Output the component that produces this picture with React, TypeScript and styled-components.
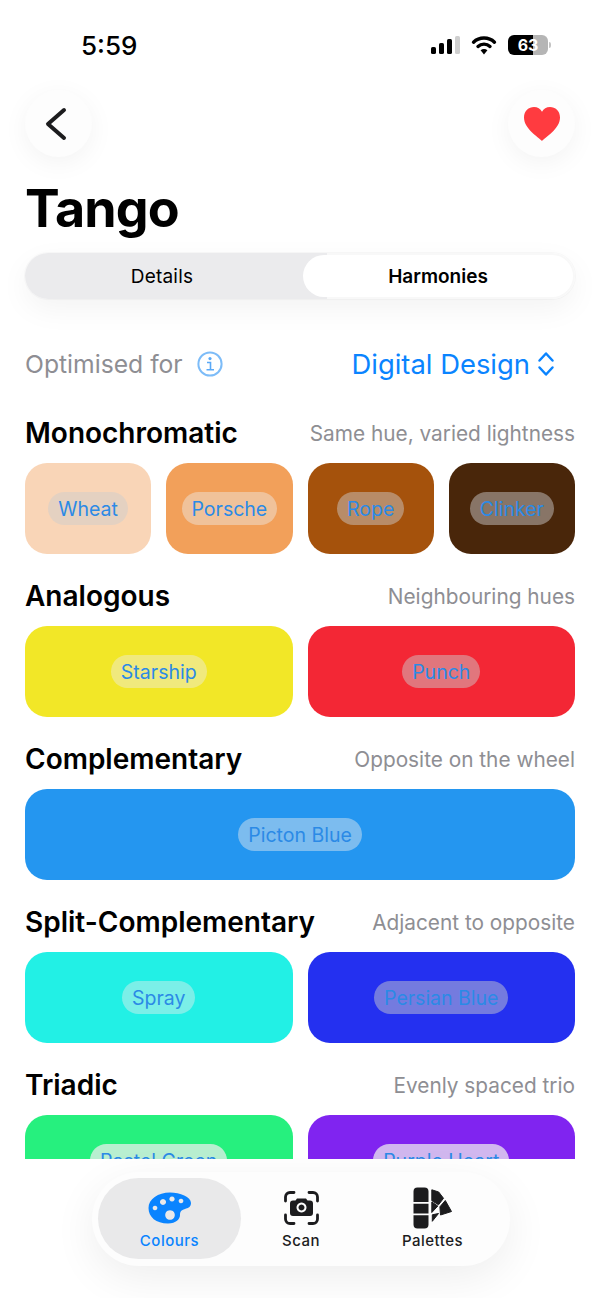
import React from "react";
import styled, { createGlobalStyle } from "styled-components";

const Global = createGlobalStyle`
  html, body { margin: 0; padding: 0; background: #fff; }
  body { font-family: Inter, "Liberation Sans", sans-serif; color: #000; }
`;

const Page = styled.div`
  width: 600px;
  height: 1298px;
  display: flex;
  flex-direction: column;
  overflow: hidden;
  background: #fff;
`;

const StatusBar = styled.div`
  height: 90px;
  flex: none;
  display: flex;
  align-items: center;
  justify-content: space-between;
  padding: 0 52px 0 81px;
  box-sizing: border-box;
`;
const Time = styled.span`
  font-size: 26px;
  font-weight: 550;
`;
const StatusIcons = styled.div`
  display: flex;
  align-items: center;
  gap: 11px;
`;
const Battery = styled.div`
  width: 40px;
  height: 20px;
  border-radius: 6px;
  background: linear-gradient(90deg, #000 0 62%, #b5b5b5 62% 100%);
  color: #fff;
  font-size: 16px;
  font-weight: 700;
  line-height: 20px;
  text-align: center;
  position: relative;
  &::after {
    content: "";
    position: absolute;
    right: -3px;
    top: 7px;
    width: 2px;
    height: 6px;
    border-radius: 0 2px 2px 0;
    background: #c4c4c4;
  }
`;

const TopRow = styled.div`
  flex: none;
  display: flex;
  justify-content: space-between;
  padding: 0 25px;
`;
const RoundButton = styled.div`
  width: 67px;
  height: 67px;
  border-radius: 50%;
  background: #fdfdfd;
  box-shadow: 0 6px 26px rgba(0, 0, 0, 0.05);
  display: flex;
  align-items: center;
  justify-content: center;
`;
const BackGlyph = styled.svg`
  margin-right: 5px;
`;
const Title = styled.h1`
  margin: 21px 25px 13px;
  font-size: 52px;
  line-height: 62px;
  font-weight: 700;
  letter-spacing: -0.9px;
`;
const Segmented = styled.div`
  flex: none;
  margin: 0 25px;
  height: 46px;
  border-radius: 23px;
  background: linear-gradient(90deg, #ebebed 55%, #f8f8f8 55%);
  display: grid;
  grid-template-columns: 1fr 1fr;
  gap: 6px;
  padding: 2px;
  box-sizing: border-box;
  box-shadow: 0 10px 30px rgba(0, 0, 0, 0.05), 0 0 0 1px rgba(0, 0, 0, 0.025);
`;
const Segment = styled.div<{ $active?: boolean }>`
  border-radius: 21px;
  display: flex;
  align-items: center;
  justify-content: center;
  font-size: 19px;
  font-weight: ${(p) => (p.$active ? 600 : 400)};
  letter-spacing: ${(p) => (p.$active ? "0" : "0.2px")};
  background: ${(p) => (p.$active ? "#fff" : "transparent")};
`;
const OptimisedRow = styled.div`
  flex: none;
  height: 40px;
  margin: 45px 25px 32px;
  display: flex;
  align-items: center;
  justify-content: space-between;
`;
const OptimisedLabel = styled.div`
  display: flex;
  align-items: center;
  gap: 14px;
  font-size: 24.7px;
  color: #8e8e93;
`;
const Picker = styled.div`
  display: flex;
  align-items: center;
  gap: 7px;
  padding-right: 20px;
  font-size: 27.4px;
  color: #0a84ff;
`;

const Scroll = styled.div`
  flex: 1;
  min-height: 0;
  overflow: hidden;
  padding: 0 25px;
  display: flex;
  flex-direction: column;
  gap: 25px;
`;
const Section = styled.section`
  flex: none;
  display: flex;
  flex-direction: column;
  gap: 13px;
`;
const SectionHead = styled.div`
  height: 34px;
  display: flex;
  align-items: center;
  justify-content: space-between;
`;
const SectionTitle = styled.h2`
  margin: 0;
  font-size: 28px;
  font-weight: 570;
  letter-spacing: 0;
`;
const SectionSub = styled.span`
  font-size: 20.8px;
  color: #8e8e93;
`;
const Swatches = styled.div<{ $cols: number }>`
  display: grid;
  grid-template-columns: repeat(${(p) => p.$cols}, 1fr);
  gap: 15px;
`;
const Swatch = styled.div<{ $bg: string }>`
  height: 91px;
  border-radius: 22px;
  background: ${(p) => p.$bg};
  display: flex;
  align-items: center;
  justify-content: center;
`;

type Tone = "muted" | "bright" | "light";
const chipBackgrounds: Record<Tone, string> = {
  muted: "rgba(204, 204, 204, 0.48)",
  bright: "rgba(236, 236, 236, 0.44)",
  light: "rgba(238, 238, 238, 0.73)",
};
const Chip = styled.span<{ $tone: Tone }>`
  height: 33px;
  padding: 0 10px;
  border-radius: 17px;
  background: ${(p) => chipBackgrounds[p.$tone]};
  color: #2b8ae6;
  font-size: 19.5px;
  line-height: 35px;
`;

const NavArea = styled.div`
  flex: none;
  height: 139px;
  display: flex;
  justify-content: center;
  padding: 13px 0 0 2px;
  box-sizing: border-box;
`;
const Nav = styled.nav`
  width: 418px;
  height: 94px;
  border-radius: 47px;
  background: #fdfdfd;
  box-shadow: 0 12px 44px rgba(0, 0, 0, 0.07);
  box-sizing: border-box;
  padding: 6px;
  display: grid;
  grid-template-columns: 143px 120px 143px;
`;
const NavItem = styled.div<{ $active?: boolean }>`
  border-radius: 41px;
  background: ${(p) => (p.$active ? "#e9e9ea" : "transparent")};
  color: ${(p) => (p.$active ? "#0a84ff" : "#1c1c1e")};
  display: flex;
  flex-direction: column;
  align-items: center;
  justify-content: flex-start;
  padding-top: 10px;
  gap: 4px;
  font-size: 15px;
  line-height: 18px;
  font-weight: 500;
  letter-spacing: 0.5px;
  height: 81px;
  box-sizing: border-box;
`;
const NavIcon = styled.div`
  height: 40px;
  display: flex;
  align-items: center;
  justify-content: center;
`;

const Signal = () => (
  <svg width="29" height="18" viewBox="0 0 29 18">
    <rect x="0" y="11" width="5" height="7" rx="1.6" fill="#000" />
    <rect x="8" y="7" width="5" height="11" rx="1.6" fill="#000" />
    <rect x="16" y="3" width="5" height="15" rx="1.6" fill="#000" />
    <rect x="24" y="0" width="5" height="18" rx="1.6" fill="#cfcfcf" />
  </svg>
);
const Wifi = () => (
  <svg width="26" height="20" viewBox="0 0 26 21">
    <path d="M2 7.5C8 1.7 18 1.7 24 7.5" fill="none" stroke="#000" strokeWidth="3.6" strokeLinecap="round" />
    <path d="M6.7 12C10.2 8.8 15.8 8.8 19.3 12" fill="none" stroke="#000" strokeWidth="3.6" strokeLinecap="round" />
    <path d="M9.4 16 13 20.5 16.6 16C14.6 14.3 11.4 14.3 9.4 16Z" fill="#000" />
  </svg>
);
const Back = () => (
  <BackGlyph width="24" height="34" viewBox="0 0 24 34">
    <path d="M20 3 4 17 20 31" fill="none" stroke="#1c1c1e" strokeWidth="4" strokeLinecap="round" strokeLinejoin="round" />
  </BackGlyph>
);
const Heart = () => (
  <svg width="38" height="36" viewBox="0 0 38 36">
    <path d="M19 35C16 31.5 1 23 1 11.5 1 5 5.8 1 11 1c3.6 0 6.4 1.800 8 4.800C20.600 2.800 23.400 1 27 1c5.200 0 10 4 10 10.500C37 23 22 31.500 19 35Z" fill="#ff3b40" />
  </svg>
);
const Info = () => (
  <svg width="26" height="26" viewBox="0 0 26 26">
    <circle cx="13" cy="13" r="11.6" fill="none" stroke="#7dbcf8" strokeWidth="2" />
    <circle cx="13" cy="7.600" r="1.600" fill="#5aa9f7" />
    <path d="M10 11.500h3.500V18.500M9.500 18.800h7.500" fill="none" stroke="#5aa9f7" strokeWidth="1.600" />
  </svg>
);
const Chevrons = () => (
  <svg width="18" height="28" viewBox="0 0 18 28">
    <path d="M2.500 10.500 9 3.500 15.500 10.500M2.500 17.500 9 24.500 15.500 17.500" fill="none" stroke="#0a84ff" strokeWidth="2.500" strokeLinecap="round" strokeLinejoin="round" />
  </svg>
);
const PaletteIcon = () => (
  <svg width="43" height="32" viewBox="0 0 43 32">
    <path
      fillRule="evenodd"
      fill="#0a84ff"
      d="M22 .5C32 .5 43 5 43 11C43 15 40 16 37 17C33 18 32 20 32 23C32 27 28 31.500 20 31.500C8 31.500 .5 25 .5 16C.5 7 10 .5 22 .5ZM15 7a3 3 0 1 0 .01 0ZM24 4.400a2.600 2.600 0 1 0 .01 0ZM33 6.700a2.300 2.300 0 1 0 .01 0ZM7 13.700a2.300 2.300 0 1 0 .01 0ZM22 18.200a4.800 4.800 0 1 0 .01 0Z"
    />
  </svg>
);
const ScanIcon = () => (
  <svg width="35" height="34" viewBox="0 0 35 34">
    <path d="M1.500 10V6a4.500 4.500 0 0 1 4.500-4.500h4M25 1.500h4a4.500 4.500 0 0 1 4.500 4.500v4M33.500 24v4a4.500 4.500 0 0 1-4.500 4.500h-4M10 32.500H6a4.500 4.500 0 0 1-4.500-4.500v-4" fill="none" stroke="#1c1c1e" strokeWidth="2.800" strokeLinecap="round" />
    <path
      fillRule="evenodd"
      fill="#1c1c1e"
      d="M11.500 9.500 13 7.500h9L23.500 9.500h2.500a3 3 0 0 1 3 3V22a3 3 0 0 1-3 3H9a3 3 0 0 1-3-3V12.500a3 3 0 0 1 3-3ZM17.500 11.500a5 5 0 1 0 .01 0ZM17.500 13.500a3 3 0 1 1-.01 0Z"
    />
  </svg>
);
const PalettesIcon = () => (
  <svg width="40" height="42" viewBox="0 0 40 42">
    <path fill="#1c1c1e" d="M4.500 .5h7a4 4 0 0 1 4 4V15H.5V4.500a4 4 0 0 1 4-4ZM.5 16.800h15V26.500H.5ZM.5 28.300h15V37.500a4 4 0 0 1-4 4h-7a4 4 0 0 1-4-4Z" />
    <g fill="#1c1c1e" stroke="#1c1c1e" strokeWidth="1" strokeLinejoin="round">
      <path d="M18.800 2.800 25.700 5 30.500 11.300 25.500 17.800 18.800 13.700Z" />
      <path d="M32.300 13.500 38.500 24.500 27.500 28 26.900 19.800Z" />
      <path d="M18.800 15 24.800 19 18.800 25.500Z" />
      <path d="M19.300 34.300 25.500 26.500 19.300 27.800Z" />
    </g>
  </svg>
);

type Sw = { name: string; bg: string; tone: Tone };
const sections: { title: string; sub: string; cols: number; items: Sw[] }[] = [
  { title: "Monochromatic", sub: "Same hue, varied lightness", cols: 4, items: [
    { name: "Wheat", bg: "#f9d5b7", tone: "muted" },
    { name: "Porsche", bg: "#f2a05a", tone: "bright" },
    { name: "Rope", bg: "#a5520c", tone: "muted" },
    { name: "Clinker", bg: "#49260a", tone: "muted" },
  ] },
  { title: "Analogous", sub: "Neighbouring hues", cols: 2, items: [
    { name: "Starship", bg: "#f2e727", tone: "bright" },
    { name: "Punch", bg: "#f32735", tone: "muted" },
  ] },
  { title: "Complementary", sub: "Opposite on the wheel", cols: 1, items: [
    { name: "Picton Blue", bg: "#2496f0", tone: "bright" },
  ] },
  { title: "Split-Complementary", sub: "Adjacent to opposite", cols: 2, items: [
    { name: "Spray", bg: "#22f0e5", tone: "bright" },
    { name: "Persian Blue", bg: "#2430f0", tone: "muted" },
  ] },
  { title: "Triadic", sub: "Evenly spaced trio", cols: 2, items: [
    { name: "Pastel Green", bg: "#26f07e", tone: "light" },
    { name: "Purple Heart", bg: "#8024f0", tone: "light" },
  ] },
];

export default function App() {
  return (
    <Page>
      <Global />
      <StatusBar>
        <Time>5:59</Time>
        <StatusIcons>
          <Signal />
          <Wifi />
          <Battery>63</Battery>
        </StatusIcons>
      </StatusBar>
      <TopRow>
        <RoundButton><Back /></RoundButton>
        <RoundButton><Heart /></RoundButton>
      </TopRow>
      <Title>Tango</Title>
      <Segmented>
        <Segment>Details</Segment>
        <Segment $active>Harmonies</Segment>
      </Segmented>
      <OptimisedRow>
        <OptimisedLabel>Optimised for <Info /></OptimisedLabel>
        <Picker>Digital Design <Chevrons /></Picker>
      </OptimisedRow>
      <Scroll>
        {sections.map((s) => (
          <Section key={s.title}>
            <SectionHead>
              <SectionTitle>{s.title}</SectionTitle>
              <SectionSub>{s.sub}</SectionSub>
            </SectionHead>
            <Swatches $cols={s.cols}>
              {s.items.map((i) => (
                <Swatch key={i.name} $bg={i.bg}><Chip $tone={i.tone}>{i.name}</Chip></Swatch>
              ))}
            </Swatches>
          </Section>
        ))}
      </Scroll>
      <NavArea>
        <Nav>
          <NavItem $active><NavIcon><PaletteIcon /></NavIcon>Colours</NavItem>
          <NavItem><NavIcon><ScanIcon /></NavIcon>Scan</NavItem>
          <NavItem><NavIcon><PalettesIcon /></NavIcon>Palettes</NavItem>
        </Nav>
      </NavArea>
    </Page>
  );
}
